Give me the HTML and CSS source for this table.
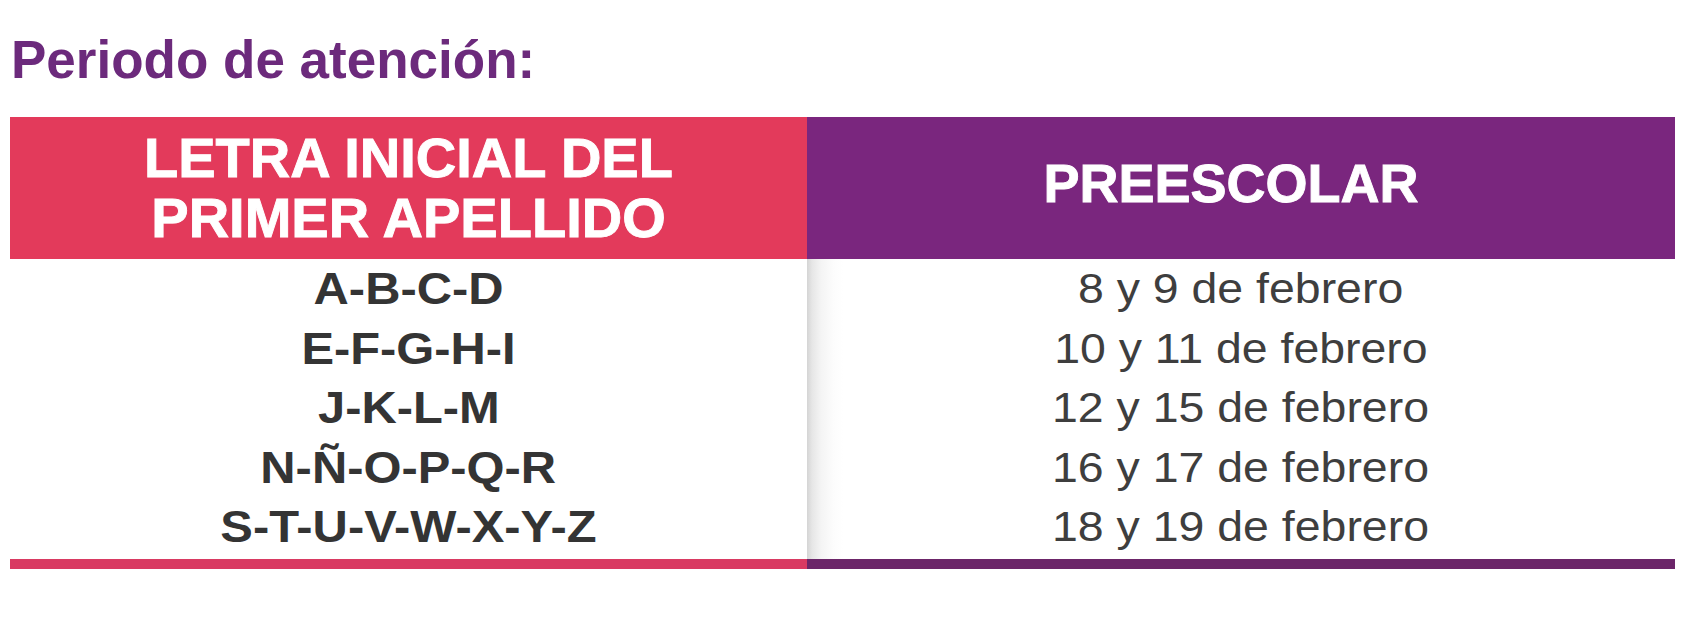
FILE: index.html
```html
<!DOCTYPE html>
<html lang="es">
<head>
<meta charset="utf-8">
<title>Periodo de atención</title>
<link rel="stylesheet" href="styles.css">
</head>
<body>
  <h2 class="title">Periodo de atención:</h2>
  <div class="table">
    <div class="head head-left">LETRA INICIAL DEL<br>PRIMER APELLIDO</div>
    <div class="head head-right">PREESCOLAR</div>
    <div class="col col-left">
      <div class="row"><span class="letters">A-B-C-D</span></div>
      <div class="row"><span class="letters">E-F-G-H-I</span></div>
      <div class="row"><span class="letters">J-K-L-M</span></div>
      <div class="row"><span class="letters">N-Ñ-O-P-Q-R</span></div>
      <div class="row"><span class="letters">S-T-U-V-W-X-Y-Z</span></div>
    </div>
    <div class="col col-right">
      <div class="row"><span class="dates">8 y 9 de febrero</span></div>
      <div class="row"><span class="dates">10 y 11 de febrero</span></div>
      <div class="row"><span class="dates">12 y 15 de febrero</span></div>
      <div class="row"><span class="dates">16 y 17 de febrero</span></div>
      <div class="row"><span class="dates">18 y 19 de febrero</span></div>
    </div>
    <div class="bar bar-left"></div>
    <div class="bar bar-right"></div>
  </div>
</body>
</html>
```

FILE: styles.css
```css
html, body {
  margin: 0;
  padding: 0;
  background: #ffffff;
}

body {
  font-family: "Liberation Sans", Arial, sans-serif;
  width: 1706px;
  height: 620px;
  overflow: hidden;
}

.title {
  margin: 30px 0 0 0;
  padding-left: 11px;
  font-size: 53px;
  line-height: 60px;
  font-weight: 700;
  color: #6c2a7c;
}

.table {
  margin: 27px 0 0 10px;
  width: 1665px;
  display: grid;
  grid-template-columns: 797px 868px;
}

.head {
  height: 142px;
  box-sizing: border-box;
  display: flex;
  align-items: center;
  justify-content: center;
  text-align: center;
  color: #ffffff;
  font-size: 56px;
  font-weight: 700;
  line-height: 60px;
  -webkit-text-stroke: 0.9px #ffffff;
}

.head-left {
  background: #e33a5b;
}

.head-right {
  background: #7a267e;
  font-size: 54px;
  padding-bottom: 10px;
  padding-right: 20px;
}

.col {
  padding-bottom: 2px;
}

.col-right {
  background: linear-gradient(to right, #d4d4d4 0px, #e6e6e6 5px, #f4f4f4 14px, #fcfcfc 26px, #ffffff 36px);
}

.row {
  height: 59.5px;
  line-height: 59.5px;
  text-align: center;
}

.letters {
  display: inline-block;
  font-size: 44px;
  font-weight: 700;
  color: #343434;
  transform: scaleX(1.11);
}

.dates {
  display: inline-block;
  font-size: 43px;
  font-weight: 400;
  color: #3e3e3e;
  transform: scaleX(1.08);
}

.bar {
  height: 10px;
}

.bar-left {
  background: #d93a62;
}

.bar-right {
  background: #6c2569;
}
```
